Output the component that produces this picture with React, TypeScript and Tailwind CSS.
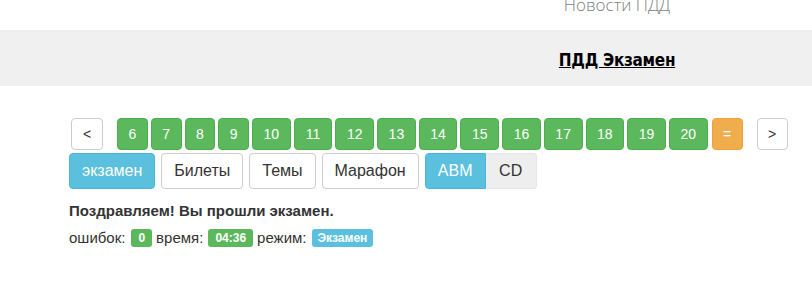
import React from 'react';

const singles = ['6', '7', '8', '9'];
const doubles = ['10', '11', '12', '13', '14', '15', '16', '17', '18', '19', '20'];

const App: React.FC = () => {
  return (
    <div className="w-[812px] h-[287px] bg-white text-[#333] font-['Liberation_Sans',Arial,sans-serif] overflow-hidden">
      {/* top nav */}
      <div className="h-[30px] overflow-hidden flex justify-end pr-[95px]">
        <div className="w-[200px] text-center -mt-[4px] leading-[17px] text-[17px] text-[#808080] font-['Open_Sans',sans-serif] font-light">
          Новости ПДД
        </div>
      </div>
      <div className="h-[56px] bg-[#f0f0f0] flex justify-end pr-[95px]">
        <div className="w-[200px] text-center pt-[19px]">
          <a className="text-[17px] leading-[20px] font-bold text-black underline font-['DejaVu_Sans_Condensed','DejaVu_Sans',sans-serif] tracking-[-0.3px]">
            ПДД Экзамен
          </a>
        </div>
      </div>

      <div className="pl-[69px] pt-[32px]">
        {/* ticket pager */}
        <div className="flex items-center h-[32px] text-[14px]">
          <button className="ml-[2px] w-[32px] h-[32px] rounded-[4px] border border-[#ccc] bg-white text-[#333]">&lt;</button>
          <div className="ml-[14px] flex gap-[3px]">
            {singles.map((n) => (
              <span key={n} className="w-[30.75px] h-[32px] rounded-[4px] bg-[#5cb85c] border border-[#4cae4c] text-white flex items-center justify-center">
                {n}
              </span>
            ))}
            {doubles.map((n) => (
              <span key={n} className="w-[38.7px] h-[32px] rounded-[4px] bg-[#5cb85c] border border-[#4cae4c] text-white flex items-center justify-center">
                {n}
              </span>
            ))}
            <span className="ml-[1px] w-[31px] h-[32px] rounded-[4px] bg-[#f0ad4e] border border-[#eea236] text-white flex items-center justify-center">
              =
            </span>
          </div>
          <button className="ml-[14px] w-[31px] h-[32px] rounded-[4px] border border-[#ccc] bg-white text-[#333]">&gt;</button>
        </div>

        {/* modes */}
        <div className="mt-[3px] flex items-center gap-[6px] text-[16px]">
          <button className="h-[36px] px-[12px] rounded-[4px] bg-[#5bc0de] border border-[#46b8da] text-white">экзамен</button>
          <button className="h-[36px] px-[12px] rounded-[4px] bg-white border border-[#ccc]">Билеты</button>
          <button className="h-[36px] px-[12px] rounded-[4px] bg-white border border-[#ccc]">Темы</button>
          <button className="h-[36px] px-[12px] rounded-[4px] bg-white border border-[#ccc]">Марафон</button>
          <div className="flex">
            <button className="h-[36px] w-[61px] rounded-l-[4px] bg-[#5bc0de] border border-[#46b8da] text-white">ABM</button>
            <button className="h-[36px] w-[51px] rounded-r-[4px] bg-[#eeeeee] border border-[#e6e6e6] border-l-0">CD</button>
          </div>
        </div>

        {/* result */}
        <div className="mt-[12px] text-[15px] font-bold leading-[20px]">Поздравляем! Вы прошли экзамен.</div>
        <div className="mt-[7px] flex items-center text-[15px] leading-[20px]">
          <span>ошибок:</span>
          <span className="ml-[6px] h-[18px] px-[7px] rounded-[3px] bg-[#5cb85c] text-white text-[12px] font-bold flex items-center">0</span>
          <span className="ml-[4px]">время:</span>
          <span className="ml-[5px] h-[18px] px-[7px] rounded-[3px] bg-[#5cb85c] text-white text-[12px] font-bold flex items-center">04:36</span>
          <span className="ml-[4px]">режим:</span>
          <span className="ml-[5px] h-[18px] px-[6px] rounded-[3px] bg-[#5bc0de] text-white text-[12px] font-bold flex items-center">Экзамен</span>
        </div>
      </div>
    </div>
  );
};

export default App;
